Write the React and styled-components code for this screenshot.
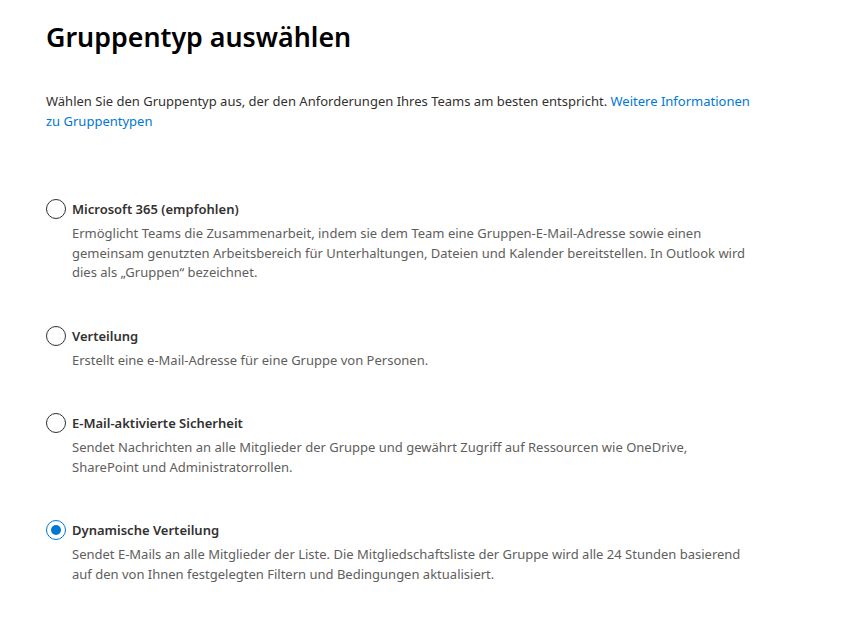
import styled, { createGlobalStyle } from "styled-components";

const GlobalStyle = createGlobalStyle`
  body {
    margin: 0;
    background: #ffffff;
    font-family: "Segoe UI", "Noto Sans", "Open Sans", sans-serif;
    color: #323130;
  }
`;

const Page = styled.div`
  padding: 19px 46px 40px 46px;
  width: 714px;
`;

const Title = styled.h1`
  margin: 0;
  font-size: 26.8px;
  line-height: 36px;
  font-weight: 600;
  color: #000000;
`;

const Intro = styled.p`
  margin: 37px 0 0 0;
  font-size: 13px;
  line-height: 19.5px;
  color: #323130;
`;

const InfoLink = styled.a`
  color: #0078d4;
  text-decoration: none;
`;

const OptionList = styled.div`
  display: flex;
  flex-direction: column;
  gap: 43px;
  margin-top: 68px;
`;

const Option = styled.label`
  display: grid;
  grid-template-columns: 20px 676px;
  column-gap: 6px;
  row-gap: 5px;
  cursor: pointer;
`;

const Radio = styled.span`
  width: 20px;
  height: 20px;
  box-sizing: border-box;
  border-radius: 50%;
  border: 1px solid ${(p) => (p.checked ? "#0078d4" : "#323130")};
  display: flex;
  align-items: center;
  justify-content: center;

  &::after {
    content: "";
    width: 10px;
    height: 10px;
    border-radius: 50%;
    background: #0078d4;
    display: ${(p) => (p.checked ? "block" : "none")};
  }
`;

const OptionName = styled.span`
  font-size: 13px;
  line-height: 20px;
  font-weight: 600;
  color: #323130;
`;

const OptionText = styled.span`
  grid-column: 2;
  font-size: 13px;
  line-height: 19.5px;
  color: #605e5c;
`;

const options = [
  {
    name: "Microsoft 365 (empfohlen)",
    text: "Ermöglicht Teams die Zusammenarbeit, indem sie dem Team eine Gruppen-E-Mail-Adresse sowie einen gemeinsam genutzten Arbeitsbereich für Unterhaltungen, Dateien und Kalender bereitstellen. In Outlook wird dies als „Gruppen“ bezeichnet.",
  },
  {
    name: "Verteilung",
    text: "Erstellt eine e-Mail-Adresse für eine Gruppe von Personen.",
  },
  {
    name: "E-Mail-aktivierte Sicherheit",
    text: "Sendet Nachrichten an alle Mitglieder der Gruppe und gewährt Zugriff auf Ressourcen wie OneDrive, SharePoint und Administratorrollen.",
  },
  {
    name: "Dynamische Verteilung",
    text: "Sendet E-Mails an alle Mitglieder der Liste. Die Mitgliedschaftsliste der Gruppe wird alle 24 Stunden basierend auf den von Ihnen festgelegten Filtern und Bedingungen aktualisiert.",
    checked: true,
  },
];

export default function App() {
  return (
    <>
      <GlobalStyle />
      <Page>
        <Title>Gruppentyp auswählen</Title>
        <Intro>
          Wählen Sie den Gruppentyp aus, der den Anforderungen Ihres Teams am besten entspricht.{" "}
          <InfoLink href="#">Weitere Informationen zu Gruppentypen</InfoLink>
        </Intro>
        <OptionList>
          {options.map((o) => (
            <Option key={o.name}>
              <Radio checked={o.checked} />
              <OptionName>{o.name}</OptionName>
              <OptionText>{o.text}</OptionText>
            </Option>
          ))}
        </OptionList>
      </Page>
    </>
  );
}
